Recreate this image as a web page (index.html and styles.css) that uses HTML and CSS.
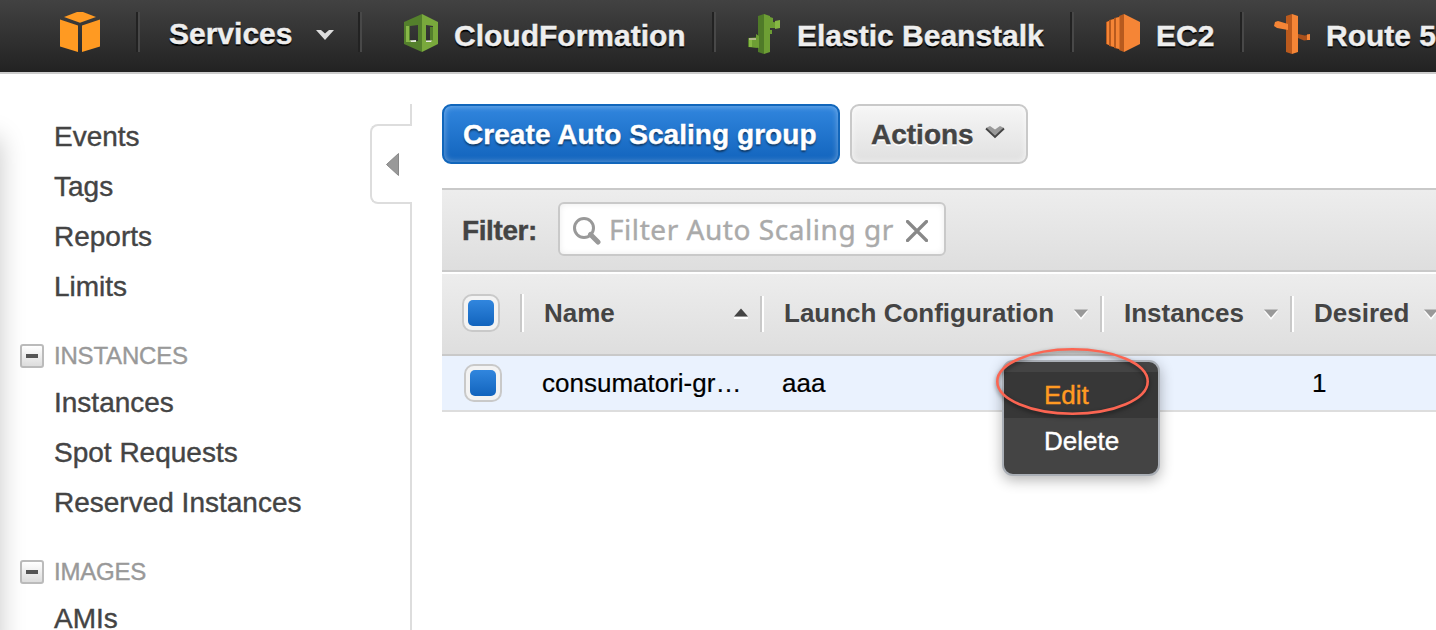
FILE: index.html
```
<!DOCTYPE html>
<html lang="en">
<head>
<meta charset="utf-8">
<title>EC2 Management Console</title>
<link rel="stylesheet" href="styles.css">
</head>
<body>
<header class="topbar">
  <a class="logo">
    <svg width="40" height="40" viewBox="0 0 40 40" fill="#ff9a22"><path d="M4 5 17 0H23L36 5 20 10.700z"/><path d="M0 7.500 18 13.500V40L0 34.500z"/><path d="M40 7.500 22 13.500V40L40 34.500z"/></svg>
  </a>
  <a class="nav services"><span>Services</span>
    <svg width="18" height="10" viewBox="0 0 18 10"><path d="M0 0H5L9 3.500 13 0H18L9 10z" fill="#ddd"/></svg>
  </a>
  <a class="nav cf">
    <svg width="34" height="38" viewBox="0 0 34 38"><path fill="#54802c" fill-rule="evenodd" d="M0 8 18 0V38L0 30zM6 12V26L14 27V11z"/><path fill="#79a93c" fill-rule="evenodd" d="M18 0 34 8V30L18 38zM22 11V27L29 26V12z"/><path d="M2 12 5 12V26L7 28H2z" fill="#88b848"/><path d="M26 13H29V26H26z" fill="#54802c"/><path d="M6 26.500 12 26V28H7zM22 26.500 28 26.500 27 28H22z" fill="#e4e9dc"/></svg>
    <span>CloudFormation</span>
  </a>
  <a class="nav eb">
    <svg width="33" height="40" viewBox="0 0 33 40"><path d="M10 2 16 0V40L10 38zM0 24 9 23V34L0 33zM20 8H28V14H22z" fill="#4f7a28"/><path d="M16 0 22 2V38L16 40zM22 3 25 4V8L28 9V14H22zM22 16H24V20H22zM8 20 11 22V34L3 33V26L8 25z" fill="#6d9e34"/><path d="M27 7 32 6V14L27 15zM1 26H4V33H1z" fill="#86b843"/><path d="M1 24H8V26H1z" fill="#b4b78d"/></svg>
    <span>Elastic Beanstalk</span>
  </a>
  <a class="nav ec2">
    <svg width="34" height="38" viewBox="0 0 34 38"><path d="M13 2 18 0V38L13 36zM8 4 13 3V35L8 34zM3 6 8 5V33L3 32zM0 8 3 7V31L0 30z" fill="#b75a1e"/><path d="M18 0 34 8V30L18 38zM10 4 13.500 3V35L10 34zM5 6 8 5V33L5 32zM1 8 3 7V31L1 30z" fill="#f58536"/></svg>
    <span>EC2</span>
  </a>
  <a class="nav r53">
    <svg width="36" height="40" viewBox="0 0 36 40"><path d="M12 2 18 0V40L12 38z" fill="#bb5a1d"/><path d="M18 0 24 2V38L18 40zM1 8 4 7 14 10V16L3 14 0 12z" fill="#f58536"/><path d="M24 20 31 21.500 34 20.500V26L30 26.500 24 24z" fill="#a9501b"/><path d="M33 20.500 36 20V26L33 26z" fill="#f58536"/></svg>
    <span>Route 53</span>
  </a>
</header>

<div class="layout">
  <nav class="sidebar">
    <ul class="links"><li>Events</li><li>Tags</li><li>Reports</li><li>Limits</li></ul>
    <h2 class="group"><i class="toggle"></i>INSTANCES</h2>
    <ul class="links"><li>Instances</li><li>Spot Requests</li><li>Reserved Instances</li></ul>
    <h2 class="group"><i class="toggle"></i>IMAGES</h2>
    <ul class="links"><li>AMIs</li></ul>
    <div class="handle"><svg width="13" height="23" viewBox="0 0 13 23"><path d="M12.500.5V22.500L.5 11.500z" fill="#999" stroke="#888"/></svg></div>
  </nav>

  <main class="main">
    <div class="actions">
      <button class="btn primary">Create Auto Scaling group</button>
      <button class="btn secondary">Actions
        <svg width="20" height="14" viewBox="0 0 20 14"><path d="M1 3 5 1 10 4.500 15 1 19 3 10 12.500z" fill="#999"/><path d="M1 3.500 10 12 19 3.500" fill="none" stroke="#444" stroke-width="1.800"/></svg>
      </button>
    </div>

    <div class="filterbar">
      <label class="filter-label">Filter:</label>
      <div class="search">
        <svg class="lens" width="28" height="28" viewBox="0 0 28 28" fill="none" stroke="#999"><circle cx="11" cy="11" r="9.500" stroke-width="3"/><path d="M17.500 17.500 25 25" stroke-width="5" stroke-linecap="round"/></svg>
        <span class="placeholder">Filter Auto Scaling gr</span>
        <svg class="clear" width="22" height="22" viewBox="0 0 22 22"><path d="M1.500 1.500 20.500 20.500M20.500 1.500 1.500 20.500" stroke="#888" stroke-width="3.200" stroke-linecap="round"/></svg>
      </div>
    </div>

    <div class="grid head">
      <div class="cell check"><i class="box"></i></div>
      <div class="cell first">Name<svg width="16" height="12" viewBox="0 0 16 12"><path d="M1 10H15V12H1z" fill="#fff"/><path d="M8 1.500 15 9.500H1z" fill="#444"/></svg></div>
      <div class="cell">Launch Configuration<svg width="16" height="12" viewBox="0 0 16 12"><path d="M1 3H15L8 12z" fill="#fff"/><path d="M1 1.500H15L8 9.500z" fill="#999"/></svg></div>
      <div class="cell">Instances<svg width="16" height="12" viewBox="0 0 16 12"><path d="M1 3H15L8 12z" fill="#fff"/><path d="M1 1.500H15L8 9.500z" fill="#999"/></svg></div>
      <div class="cell last">Desired<svg width="16" height="12" viewBox="0 0 16 12"><path d="M1 3H15L8 12z" fill="#fff"/><path d="M1 1.500H15L8 9.500z" fill="#999"/></svg></div>
    </div>
    <div class="grid row">
      <div class="check"><i class="box"></i></div>
      <div class="data">consumatori-gr…</div>
      <div class="data">aaa</div>
      <div class="data"></div>
      <div class="data">1</div>
    </div>
  </main>
</div>

<div class="menu">
  <div class="item active">Edit</div>
  <div class="item">Delete</div>
</div>
<svg class="ring" width="164" height="80" viewBox="0 0 164 80"><ellipse cx="81.500" cy="38.500" rx="75.200" ry="32.200" fill="none" stroke="#fb6552" stroke-width="2.600"/></svg>
</body>
</html>
```
FILE: styles.css
```
* { box-sizing: border-box; }
body {
  margin: 0;
  width: 1436px;
  height: 630px;
  overflow: hidden;
  position: relative;
  background: #fff;
  color: #444;
  font-family: "Liberation Sans", Arial, sans-serif;
}
svg { display: block; flex: none; }

.topbar {
  display: flex;
  height: 74px;
  padding-top: 12px;
  border-bottom: 2px solid #ccc;
  background: linear-gradient(#424242, #222);
  overflow: hidden;
}
.logo { flex: none; width: 136px; padding-left: 60px; }
.nav {
  display: flex;
  flex: none;
  height: 40px;
  border-left: 2px solid #222;
  box-shadow: inset 2px 0 #484848;
  font-size: 30px;
  font-weight: bold;
  line-height: 40px;
  white-space: nowrap;
  color: #eee;
  text-shadow: 0 2px 1px #000;
  -webkit-text-stroke: .4px;
}
.nav > span { padding-top: 4px; }
.services { width: 222px; padding-left: 31px; }
.services > span { padding-top: 2px; }
.services svg { margin: 18px 0 0 24px; }
.cf { width: 354px; padding-left: 44px; gap: 16px; }
.eb { width: 358px; padding-left: 34px; gap: 16px; }
.ec2 { width: 170px; padding-left: 34px; gap: 16px; }
.r53 { width: 240px; padding-left: 32px; gap: 16px; }
.cf svg, .eb svg, .ec2 svg, .r53 svg { margin-top: 2px; }

.layout { display: flex; height: 556px; }
.sidebar {
  position: relative;
  flex: none;
  width: 412px;
  margin-top: 30px;
  padding-top: 7px;
  border-right: 2px solid #ddd;
}
.sidebar::before {
  content: "";
  position: absolute;
  left: -30px;
  top: 34px;
  width: 30px;
  height: 520px;
  box-shadow: 0 0 26px rgba(0, 0, 0, .22);
}
.links { margin: 0; padding: 0 0 0 54px; list-style: none; }
.links li {
  height: 50px;
  line-height: 51px;
  font-size: 28px;
  -webkit-text-stroke: .4px;
}
.group {
  display: flex;
  align-items: center;
  gap: 10px;
  height: 34px;
  margin: 28px 0 4px;
  padding-left: 20px;
  font-size: 24px;
  font-weight: normal;
  letter-spacing: -.2px;
  color: #999;
  -webkit-text-stroke: .4px;
}
.toggle {
  display: grid;
  place-items: center;
  width: 24px;
  height: 24px;
  border: 2px solid #bbb;
  border-radius: 3px;
  background: linear-gradient(#fff, #ddd);
}
.toggle::before { content: ""; width: 12px; height: 4px; background: #555; }
.handle {
  position: absolute;
  right: -2px;
  top: 20px;
  display: flex;
  align-items: center;
  width: 42px;
  height: 80px;
  padding-left: 14px;
  border: 2px solid #ddd;
  border-right: 0;
  border-radius: 8px 0 0 8px;
  background: #fff;
}

.main { flex: none; width: 1024px; margin-left: 30px; padding-top: 30px; }
.actions { display: flex; gap: 10px; height: 60px; margin-bottom: 24px; }
.btn {
  display: flex;
  align-items: center;
  height: 60px;
  padding: 1px 0 0 19px;
  border: 2px solid #c9c9c9;
  border-radius: 9px;
  font: bold 28px "Liberation Sans", Arial, sans-serif;
  white-space: nowrap;
  -webkit-text-stroke: .4px;
}
.btn svg { margin-top: -5px; }
.secondary {
  gap: 11px;
  width: 178px;
  background: linear-gradient(#f6f6f6, #e0e0e0);
  box-shadow: inset 0 0 6px rgba(255, 255, 255, .7);
  color: #444;
  text-shadow: 0 2px #fff;
}
.primary {
  width: 398px;
  border-color: #1166bb;
  background: linear-gradient(#3186de, #1264bd);
  box-shadow: inset 0 0 6px rgba(255, 255, 255, .4);
  letter-spacing: .06px;
  color: #fff;
  text-shadow: 0 2px 2px rgba(0, 0, 0, .5);
}
.filterbar {
  display: flex;
  align-items: center;
  height: 84px;
  padding: 0 0 2px 20px;
  border-top: 2px solid #c9c9c9;
  border-bottom: 2px solid #c9c9c9;
  background: linear-gradient(#ededed, #dedede);
}
.filter-label {
  width: 96px;
  padding-top: 3px;
  font-size: 28px;
  font-weight: bold;
  letter-spacing: -.4px;
  -webkit-text-stroke: .4px;
}
.search {
  display: flex;
  align-items: center;
  width: 388px;
  height: 54px;
  padding-left: 13px;
  border: 2px solid #c9c9c9;
  border-radius: 6px;
  background: #fff;
  box-shadow: inset 0 0 6px rgba(0, 0, 0, .08);
}
.lens { margin-top: 3px; }
.clear { margin-top: 3px; }
.placeholder {
  width: 305px;
  padding-left: 8px;
  font-family: "Noto Sans", sans-serif;
  font-size: 28px;
  line-height: 50px;
  letter-spacing: .55px;
  white-space: nowrap;
  color: #aaa;
  -webkit-text-stroke: .4px;
}
.grid { display: grid; grid-template-columns: 78px 240px 340px 190px 176px; }
.head {
  height: 82px;
  margin-top: 2px;
  padding-top: 22px;
  border-bottom: 2px solid #c9c9c9;
  background: linear-gradient(#ededed, #dedede);
  font-size: 26px;
  font-weight: bold;
}
.cell {
  display: flex;
  align-items: center;
  justify-content: space-between;
  height: 36px;
  padding: 0 11px 2px 22px;
  border-left: 2px solid #c9c9c9;
  box-shadow: inset 2px 0 #fff;
  white-space: nowrap;
}
.cell svg { margin-top: 2px; }
.cell.first { height: 38px; margin-top: -2px; padding-bottom: 0; }
.cell.first svg { margin-top: -1px; }
.cell.last { width: 160px; }
.cell.check {
  display: block;
  height: 38px;
  margin-top: -2px;
  padding: 0 0 0 20px;
  border: 0;
  box-shadow: none;
}
.box {
  display: block;
  width: 38px;
  height: 38px;
  padding: 4px;
  border: 2px solid #c9c9c9;
  border-radius: 10px;
  background: #f3f3f3;
}
.box::before {
  content: "";
  display: block;
  width: 26px;
  height: 26px;
  border-radius: 5px;
  background: linear-gradient(#3186de, #1264bd);
}
.row {
  align-items: center;
  height: 56px;
  border-bottom: 2px solid #ddd;
  background: #eaf2fe;
  font-size: 26px;
  color: #000;
}
.row .check { padding-left: 22px; }
.data { padding-left: 22px; white-space: nowrap; -webkit-text-stroke: .2px; }

/* Popup menu over the table */
.menu {
  position: absolute;
  left: 1002px;
  top: 360px;
  width: 158px;
  height: 116px;
  padding-top: 10px;
  border: 2px solid #aaafb6;
  border-radius: 11px;
  background: #444;
  box-shadow: 0 4px 14px rgba(0, 0, 0, .3);
}
.item {
  height: 46px;
  padding-left: 40px;
  line-height: 46px;
  font-size: 26px;
  color: #fff;
  -webkit-text-stroke: .4px;
}
.item.active { background: #373737; color: #ff9a22; }
.ring {
  position: absolute;
  left: 991px;
  top: 343px;
  filter: drop-shadow(0 2px 2px rgba(0, 0, 0, .5));
}
```
